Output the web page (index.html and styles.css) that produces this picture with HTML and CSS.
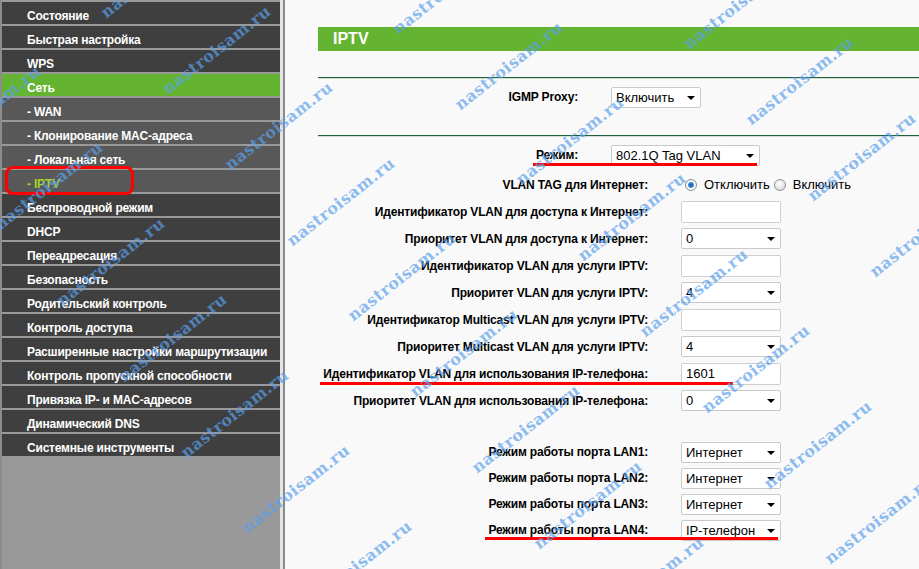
FILE: index.html
```html
<!DOCTYPE html>
<html lang="ru">
<head>
    <meta charset="UTF-8">
    <title>IPTV</title>
    <link rel="stylesheet" href="styles.css">
</head>
<body>
<div class="page">
    <nav class="side">
        <ul class="menu">
            <li class="item">Состояние</li>
            <li class="item">Быстрая настройка</li>
            <li class="item">WPS</li>
            <li class="item on">Сеть</li>
            <li class="item sub">- WAN</li>
            <li class="item sub">- Клонирование MAC-адреса</li>
            <li class="item sub">- Локальная сеть</li>
            <li class="item sub cur">- IPTV</li>
            <li class="item">Беспроводной режим</li>
            <li class="item">DHCP</li>
            <li class="item">Переадресация</li>
            <li class="item">Безопасность</li>
            <li class="item">Родительский контроль</li>
            <li class="item">Контроль доступа</li>
            <li class="item">Расширенные настройки маршрутизации</li>
            <li class="item">Контроль пропускной способности</li>
            <li class="item">Привязка IP- и MAC-адресов</li>
            <li class="item">Динамический DNS</li>
            <li class="item">Системные инструменты</li>
        </ul>
    </nav>

    <main class="main">
        <h1 class="title">IPTV</h1>
        <div class="rule"></div>

        <div class="form form-top igmp">
            <label class="lbl">IGMP Proxy:</label>
            <span class="sel w90"><select><option>Включить</option></select></span>
        </div>

        <div class="rule rule-2"></div>

        <div class="form form-top mode">
            <label class="lbl">Режим:</label>
            <span class="sel w149"><select><option>802.1Q Tag VLAN</option></select></span>
        </div>

        <div class="form form-vlan">
            <label class="lbl">VLAN TAG для Интернет:</label>
            <div class="radios">
                <span class="radio checked"></span><span class="radio-text">Отключить</span>
                <span class="radio"></span><span class="radio-text">Включить</span>
            </div>

            <label class="lbl">Идентификатор VLAN для доступа к Интернет:</label>
            <input class="inp" type="text" value="">

            <label class="lbl">Приоритет VLAN для доступа к Интернет:</label>
            <span class="sel"><select><option>0</option></select></span>

            <label class="lbl">Идентификатор VLAN для услуги IPTV:</label>
            <input class="inp" type="text" value="">

            <label class="lbl">Приоритет VLAN для услуги IPTV:</label>
            <span class="sel"><select><option>4</option></select></span>

            <label class="lbl">Идентификатор Multicast VLAN для услуги IPTV:</label>
            <input class="inp" type="text" value="">

            <label class="lbl">Приоритет Multicast VLAN для услуги IPTV:</label>
            <span class="sel"><select><option>4</option></select></span>

            <label class="lbl">Идентификатор VLAN для использования IP-телефона:</label>
            <input class="inp" type="text" value="1601">

            <label class="lbl">Приоритет VLAN для использования IP-телефона:</label>
            <span class="sel"><select><option>0</option></select></span>
        </div>

        <div class="form form-lan">
            <label class="lbl">Режим работы порта LAN1:</label>
            <span class="sel"><select><option>Интернет</option></select></span>

            <label class="lbl">Режим работы порта LAN2:</label>
            <span class="sel"><select><option>Интернет</option></select></span>

            <label class="lbl">Режим работы порта LAN3:</label>
            <span class="sel"><select><option>Интернет</option></select></span>

            <label class="lbl">Режим работы порта LAN4:</label>
            <span class="sel"><select><option>IP-телефон</option></select></span>
        </div>
    </main>
</div>

<!-- red pen marks -->
<div class="mark mark-box"></div>
<div class="mark mark-mode"></div>
<div class="mark mark-phone"></div>
<div class="mark mark-lan4"></div>

<div class="wm"></div>

<script type="text/javascript">
    (() => {
        const layer = document.querySelector('.wm');
        const u = { x: 291.5, y: 15.5 }; // step along a row of marks
        const v = { x: 61.8, y: 75.8 };  // step to the next row

        for (let j = -1; j <= 7; j++) {
            for (let i = -1; i <= 3; i++) {
                const x = 170 + u.x * i + v.x * j;
                const y = 97 + u.y * i + v.y * j;
                if (x < -170 || x > 919 || y < -10 || y > 680) continue;
                const s = document.createElement('span');
                s.className = 'wm-text';
                s.textContent = 'nastroisam.ru';
                s.style.left = x + 'px';
                s.style.top = (y - 16) + 'px';
                layer.appendChild(s);
            }
        }
    })();
</script>
</body>
</html>
```

FILE: styles.css
```css
body {
    margin: 0;
    font-family: "Liberation Sans", Arial, sans-serif;
    font-size: 12px;
    background: #f9f9f9;
    overflow: hidden;
}
.page {
    display: flex;
    height: 569px;
}

/* left menu */
.side {
    flex: none;
    width: 278px;
    border-left: 2px solid #8c8c8c;
    border-right: 3px solid #e3e3e3;
    background: #999;
}
.menu {
    list-style: none;
    margin: 0;
    padding: 2px 0 0;
}
.item {
    height: 22px;
    margin-bottom: 2px;
    padding-left: 25px;
    line-height: 28px;
    background: #3f3f3f;
    color: #fff;
    font-weight: bold;
    letter-spacing: -0.2px;
    white-space: nowrap;
    overflow: hidden;
}
.item.sub {
    background: #585858;
}
.item.on {
    background: #64b432;
}
.item.cur {
    color: #a6d22e;
}

/* content */
.main {
    flex: 1;
    border-left: 2px solid #8a8a8a;
    padding: 27px 0 0 33px;
}
.title {
    margin: 0;
    height: 24px;
    padding-left: 15px;
    line-height: 24px;
    background: #64b432;
    color: #fff;
    font-size: 16px;
    font-weight: bold;
}
.rule {
    margin-top: 26px;
    border-top: 1px solid #1f5f3a;
    border-bottom: 1px solid #d3ded5;
}
.rule-2 {
    margin-top: 27px;
}
.form {
    display: grid;
    grid-template-columns: 330px 100px;
    column-gap: 33px;
    align-items: center;
}
.form-top {
    grid-template-columns: 260px auto;
    grid-auto-rows: 22px;
    margin-top: 7px;
}
.form-vlan {
    grid-auto-rows: 27px;
    margin-top: 5px;
}
.form-lan {
    grid-auto-rows: 26px;
    margin-top: 25px;
}
.lbl {
    text-align: right;
    font-weight: bold;
    color: #000;
    letter-spacing: -0.15px;
    white-space: nowrap;
}

/* controls */
.sel {
    position: relative;
    display: block;
    width: 100px;
    height: 21px;
}
.sel.w90 {
    width: 90px;
}
.sel.w149 {
    width: 149px;
}
.sel select {
    -webkit-appearance: none;
    appearance: none;
    box-sizing: border-box;
    width: 100%;
    height: 100%;
    margin: 0;
    padding: 0 0 0 4px;
    border: 1px solid #c9c9c9;
    border-radius: 2px;
    background: #fff;
    color: #000;
    font-family: "Liberation Sans", Arial, sans-serif;
    font-size: 13px;
}
.sel::after {
    content: "";
    position: absolute;
    right: 6px;
    top: 9px;
    border-left: 4px solid transparent;
    border-right: 4px solid transparent;
    border-top: 4px solid #000;
}
.inp {
    box-sizing: border-box;
    width: 100px;
    height: 22px;
    margin: 0;
    padding: 0 4px;
    border: 1px solid #cfcfcf;
    border-radius: 2px;
    background: #fff;
    font-family: "Liberation Sans", Arial, sans-serif;
    font-size: 13px;
}
.radios {
    display: flex;
    align-items: center;
    width: 200px;
    padding-left: 4px;
    font-size: 13px;
    white-space: nowrap;
}
.radio {
    flex: none;
    box-sizing: border-box;
    width: 12px;
    height: 12px;
    border: 1px solid #8e8f8f;
    border-radius: 50%;
    background: radial-gradient(circle at 40% 35%, #fff, #d4d4d4);
}
.radio.checked {
    background: radial-gradient(circle, #1c5fa8 0, #3d86d6 2.5px, #fff 3.5px, #e4e4e4 6px);
}
.radio-text {
    margin: 0 4px 0 7px;
}

/* red pen marks */
.mark {
    position: absolute;
    height: 3px;
    background: #f00;
}
.mark-box {
    left: 5px;
    top: 166px;
    width: 129px;
    height: 29px;
    box-sizing: border-box;
    border: 3px solid #f00;
    border-radius: 8px;
    background: none;
}
.mark-mode {
    left: 533px;
    top: 163px;
    width: 224px;
}
.mark-phone {
    left: 320px;
    top: 382px;
    width: 413px;
}
.mark-lan4 {
    left: 485px;
    top: 537px;
    width: 293px;
}

/* watermark */
.wm {
    position: absolute;
    top: 0;
    right: 0;
    bottom: 0;
    left: 0;
    overflow: hidden;
    pointer-events: none;
}
.wm-text {
    position: absolute;
    font-family: "DejaVu Serif", serif;
    font-weight: bold;
    font-size: 16px;
    line-height: 16px;
    letter-spacing: 0.5px;
    color: rgba(90, 160, 235, .7);
    white-space: nowrap;
    transform-origin: 0 100%;
    transform: rotate(-38deg);
}
```
